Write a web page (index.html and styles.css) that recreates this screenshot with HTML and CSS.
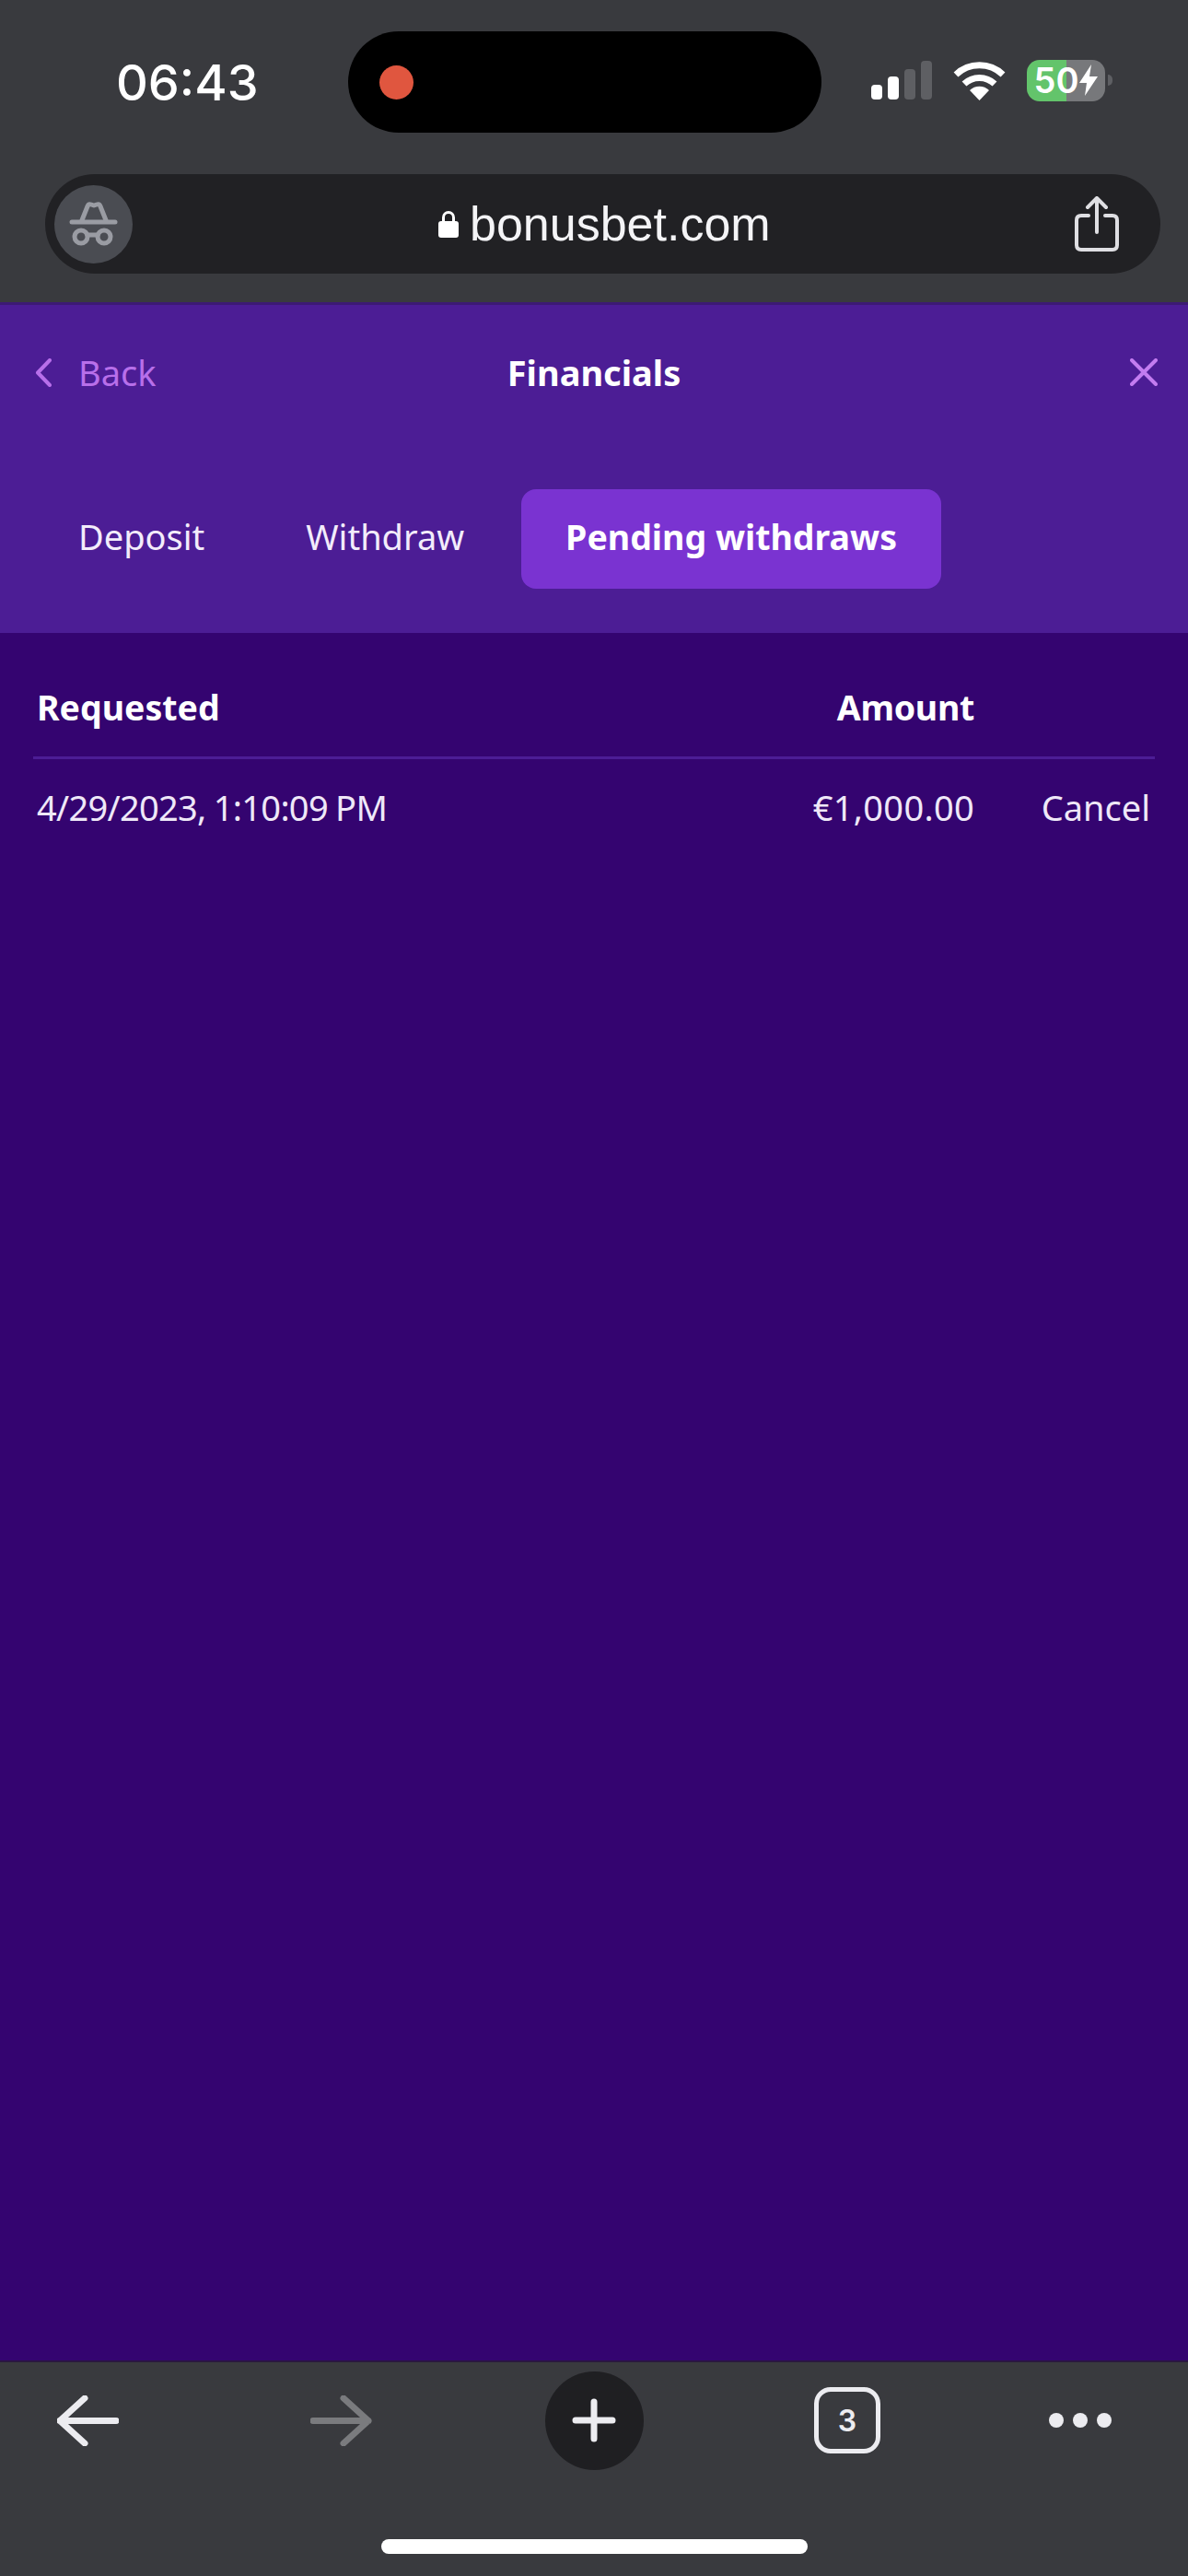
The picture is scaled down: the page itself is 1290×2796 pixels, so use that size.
FILE: index.html
```html
<!DOCTYPE html>
<html lang="en">
  <head>
    <meta charset="UTF-8" />
    <title>Financials</title>
    <meta name="viewport" content="width=device-width,initial-scale=1" />
    <link rel="stylesheet" href="styles.css">
  </head>
  <body>
    <div class="page">
      <!-- status bar + address bar -->
      <div class="browser-top">
        <div class="status-bar">
          <span class="clock">06:43</span>
          <div class="island"><span class="rec-dot"></span></div>
          <div class="status-icons">
            <div class="signal">
              <span class="bar bar-1"></span>
              <span class="bar bar-2"></span>
              <span class="bar bar-3"></span>
              <span class="bar bar-4"></span>
            </div>
            <svg class="wifi" width="57" height="43" viewBox="0 0 57 43">
              <path class="wifi-arc" d="M3 15 A37 37 0 0 1 54 15" />
              <path class="wifi-arc" d="M12 25 A24 24 0 0 1 45 25" />
              <path class="wifi-dot" d="M28.5 43 L18 32 A15 15 0 0 1 39 32 Z" />
            </svg>
            <div class="battery">
              <span class="battery-level">50</span>
              <svg class="bolt" width="20" height="34" viewBox="0 0 20 34">
                <path d="M13 0 L0 20 H8 L6 34 L20 13 H11 Z" />
              </svg>
            </div>
            <span class="battery-cap"></span>
          </div>
        </div>
        <div class="address-bar">
          <div class="incognito">
            <svg width="85" height="85" viewBox="0 0 85 85">
              <path class="spy" d="M30 38 L36 23 Q37 20 40 21 L43 22 L46 21 Q49 20 50 23 L56 38" />
              <path class="spy" d="M19 40 H66" />
              <circle class="spy" cx="29" cy="56" r="7" />
              <circle class="spy" cx="54" cy="56" r="7" />
              <path class="spy" d="M36 54 H47" />
            </svg>
          </div>
          <div class="url">
            <svg class="lock" width="22" height="30" viewBox="0 0 22 30">
              <path class="lock-ring" d="M5.5 14 V8 A5.5 5.5 0 0 1 16.5 8 V14" />
              <rect class="lock-body" x="0" y="12" width="22" height="18" rx="3" />
            </svg>
            <span>bonusbet.com</span>
          </div>
          <svg class="share" width="48" height="60" viewBox="0 0 48 60">
            <path d="M15 21 H7 Q2 21 2 26 V53 Q2 58 7 58 H41 Q46 58 46 53 V26 Q46 21 41 21 H33" />
            <path d="M24 3 V39 M14 12 L24 2 L34 12" />
          </svg>
        </div>
      </div>

      <!-- header + tabs -->
      <div class="panel-head">
        <div class="title-row">
          <a class="back-link">
            <svg width="18" height="31" viewBox="0 0 18 31">
              <path d="M16 2 L3 15.5 L16 29" />
            </svg>
            <span>Back</span>
          </a>
          <h1 class="title">Financials</h1>
          <svg class="close" width="30" height="30" viewBox="0 0 30 30">
            <path d="M2 2 L28 28 M28 2 L2 28" />
          </svg>
        </div>
        <div class="tabs">
          <a class="tab">Deposit</a>
          <a class="tab">Withdraw</a>
          <a class="tab active">Pending withdraws</a>
        </div>
      </div>

      <!-- pending list -->
      <div class="content">
        <div class="table-row table-head">
          <span>Requested</span>
          <span class="amount">Amount</span>
          <span></span>
        </div>
        <div class="table-row">
          <span class="date">4/29/2023, 1:10:09 PM</span>
          <span class="amount">€1,000.00</span>
          <a class="cancel">Cancel</a>
        </div>
      </div>

      <!-- browser toolbar -->
      <div class="browser-bottom">
        <div class="toolbar">
          <svg class="tool-icon" width="67" height="55" viewBox="0 0 67 55">
            <path d="M64 27.5 H3 M30 3 L3 27.5 L30 52" />
          </svg>
          <svg class="tool-icon disabled" width="67" height="55" viewBox="0 0 67 55">
            <path d="M3 27.5 H63 M36 3 L63 27.5 L36 52" />
          </svg>
          <div class="new-tab">
            <svg class="tool-icon" width="48" height="48" viewBox="0 0 48 48">
              <path d="M4 24 H44 M24 4 V44" />
            </svg>
          </div>
          <div class="tab-count">3</div>
          <div class="more">
            <span></span><span></span><span></span>
          </div>
        </div>
        <div class="home-bar"></div>
      </div>
    </div>
  </body>
</html>
```

FILE: styles.css
```css
* {
  box-sizing: border-box;
}
body {
  margin: 0;
  font-family: "Noto Sans", sans-serif;
  background: #340470;
  color: #fff;
}
.page {
  width: 1290px;
  height: 2796px;
  display: flex;
  flex-direction: column;
  overflow: hidden;
}

/* top browser chrome */
.browser-top {
  height: 328px;
  background: #393a3e;
}
.status-bar {
  height: 178px;
  display: flex;
  align-items: center;
  padding-left: 126px;
}
.clock {
  width: 252px;
  font-family: Inter, sans-serif;
  font-size: 54px;
  font-weight: 500;
}
.island {
  width: 514px;
  height: 110px;
  background: #000;
  border-radius: 55px;
  display: flex;
  align-items: center;
  padding-left: 34px;
}
.rec-dot {
  width: 37px;
  height: 37px;
  border-radius: 50%;
  background: #e0563f;
}
.status-icons {
  margin-left: 54px;
  display: flex;
  align-items: center;
  margin-top: -4px;
}
.signal {
  display: flex;
  align-items: flex-end;
  gap: 6px;
  height: 42px;
}
.bar {
  width: 12px;
  border-radius: 4px;
  background: #fff;
}
.bar-1 {
  height: 16px;
}
.bar-2 {
  height: 25px;
}
.bar-3 {
  height: 33px;
  background: #5e5f63;
}
.bar-4 {
  height: 42px;
  background: #5e5f63;
}
.wifi {
  margin-left: 23px;
}
.wifi-arc {
  fill: none;
  stroke: #fff;
  stroke-width: 7;
}
.wifi-dot {
  fill: #fff;
}
.battery {
  margin-left: 23px;
  width: 85px;
  height: 45px;
  border-radius: 14px;
  background: linear-gradient(90deg, #63c46b 0 43px, #77787b 43px);
  display: flex;
  align-items: center;
  justify-content: center;
  gap: 1px;
  font-family: Inter, sans-serif;
  font-size: 38px;
  font-weight: 600;
}
.bolt {
  fill: #fff;
}
.battery-cap {
  width: 5px;
  height: 12px;
  margin-left: 3px;
  border-radius: 0 5px 5px 0;
  background: #5e5f63;
}
.address-bar {
  margin: 11px 30px 0 49px;
  height: 108px;
  border-radius: 54px;
  background: #212124;
  display: flex;
  align-items: center;
  padding: 0 45px 0 10px;
  justify-content: space-between;
  position: relative;
}
.incognito {
  width: 85px;
  height: 85px;
  border-radius: 50%;
  background: #4a4c52;
}
.spy {
  fill: none;
  stroke: #9a9ca3;
  stroke-width: 5;
  stroke-linecap: round;
  stroke-linejoin: round;
}
.url {
  position: absolute;
  left: 427px;
  top: 0;
  height: 108px;
  display: flex;
  align-items: center;
  gap: 12px;
  font-family: "Liberation Sans", sans-serif;
  font-size: 52px;
  color: #f4f4f6;
}
.lock-ring {
  fill: none;
  stroke: #fff;
  stroke-width: 3;
}
.lock-body {
  fill: #fff;
}
.share {
  fill: none;
  stroke: #dfdfe3;
  stroke-width: 4;
  stroke-linecap: round;
  stroke-linejoin: round;
}

/* purple header */
.panel-head {
  height: 359px;
  background: #4c1d95;
  border-top: 3px solid #3c1a74;
}
.title-row {
  height: 146px;
  display: flex;
  align-items: center;
  justify-content: space-between;
  padding: 0 33px 0 38px;
  position: relative;
}
.back-link {
  display: flex;
  align-items: center;
  gap: 29px;
  color: #b86fea;
  font-size: 38px;
}
.back-link svg {
  fill: none;
  stroke: #b86fea;
  stroke-width: 4;
  stroke-linecap: round;
  stroke-linejoin: round;
}
.title {
  position: absolute;
  left: 0;
  right: 0;
  margin: 0;
  text-align: center;
  font-size: 38px;
  font-weight: 700;
}
.close {
  fill: none;
  stroke: #c37cf0;
  stroke-width: 4;
  stroke-linecap: round;
}
.tabs {
  margin-top: 54px;
  padding-left: 37px;
  display: flex;
  gap: 14px;
}
.tab {
  height: 108px;
  padding: 0 48px 6px;
  display: flex;
  align-items: center;
  border-radius: 16px;
  font-size: 38px;
  color: #f3ecfb;
}
.tab.active {
  background: #7a33d1;
  font-size: 37.5px;
  font-weight: 700;
  color: #fff;
}

/* table */
.content {
  flex: 1;
  background: #340470;
  padding: 0 36px;
}
.table-row {
  display: grid;
  grid-template-columns: 1fr auto 196px;
  align-items: center;
  height: 104px;
  padding-left: 4px;
  font-size: 38px;
  color: #efe8f8;
}
.table-head {
  height: 137px;
  padding-top: 26px;
  border-bottom: 3px solid #4c1d95;
  font-size: 37.5px;
  font-weight: 700;
  color: #fff;
}
.date {
  letter-spacing: -0.7px;
  word-spacing: -1px;
}
.amount {
  text-align: right;
  letter-spacing: 0.3px;
}
.table-head .amount {
  letter-spacing: -0.3px;
}
.cancel {
  text-align: right;
  padding-right: 5px;
}

/* bottom browser chrome */
.browser-bottom {
  height: 234px;
  background: #393a3e;
  border-top: 2px solid #2a1840;
  padding-top: 9px;
}
.toolbar {
  display: grid;
  grid-template-columns: 190px 360px 190px 360px 146px;
  justify-items: center;
  align-items: center;
  height: 108px;
}
.tool-icon {
  fill: none;
  stroke: #ececf0;
  stroke-width: 7;
  stroke-linecap: round;
  stroke-linejoin: round;
}
.tool-icon.disabled {
  stroke: #7a7b7e;
}
.new-tab {
  width: 107px;
  height: 107px;
  border-radius: 50%;
  background: #1f1f22;
  display: flex;
  align-items: center;
  justify-content: center;
}
.tab-count {
  width: 72px;
  height: 72px;
  border: 5px solid #ececf0;
  border-radius: 18px;
  display: flex;
  align-items: center;
  justify-content: center;
  font-family: Inter, sans-serif;
  font-size: 32px;
  font-weight: 600;
  color: #ececf0;
}
.more {
  display: flex;
  gap: 10px;
}
.more span {
  width: 16px;
  height: 16px;
  border-radius: 50%;
  background: #ececf0;
}
.home-bar {
  width: 463px;
  height: 16px;
  margin: 75px auto 0;
  border-radius: 8px;
  background: #fff;
}
```
